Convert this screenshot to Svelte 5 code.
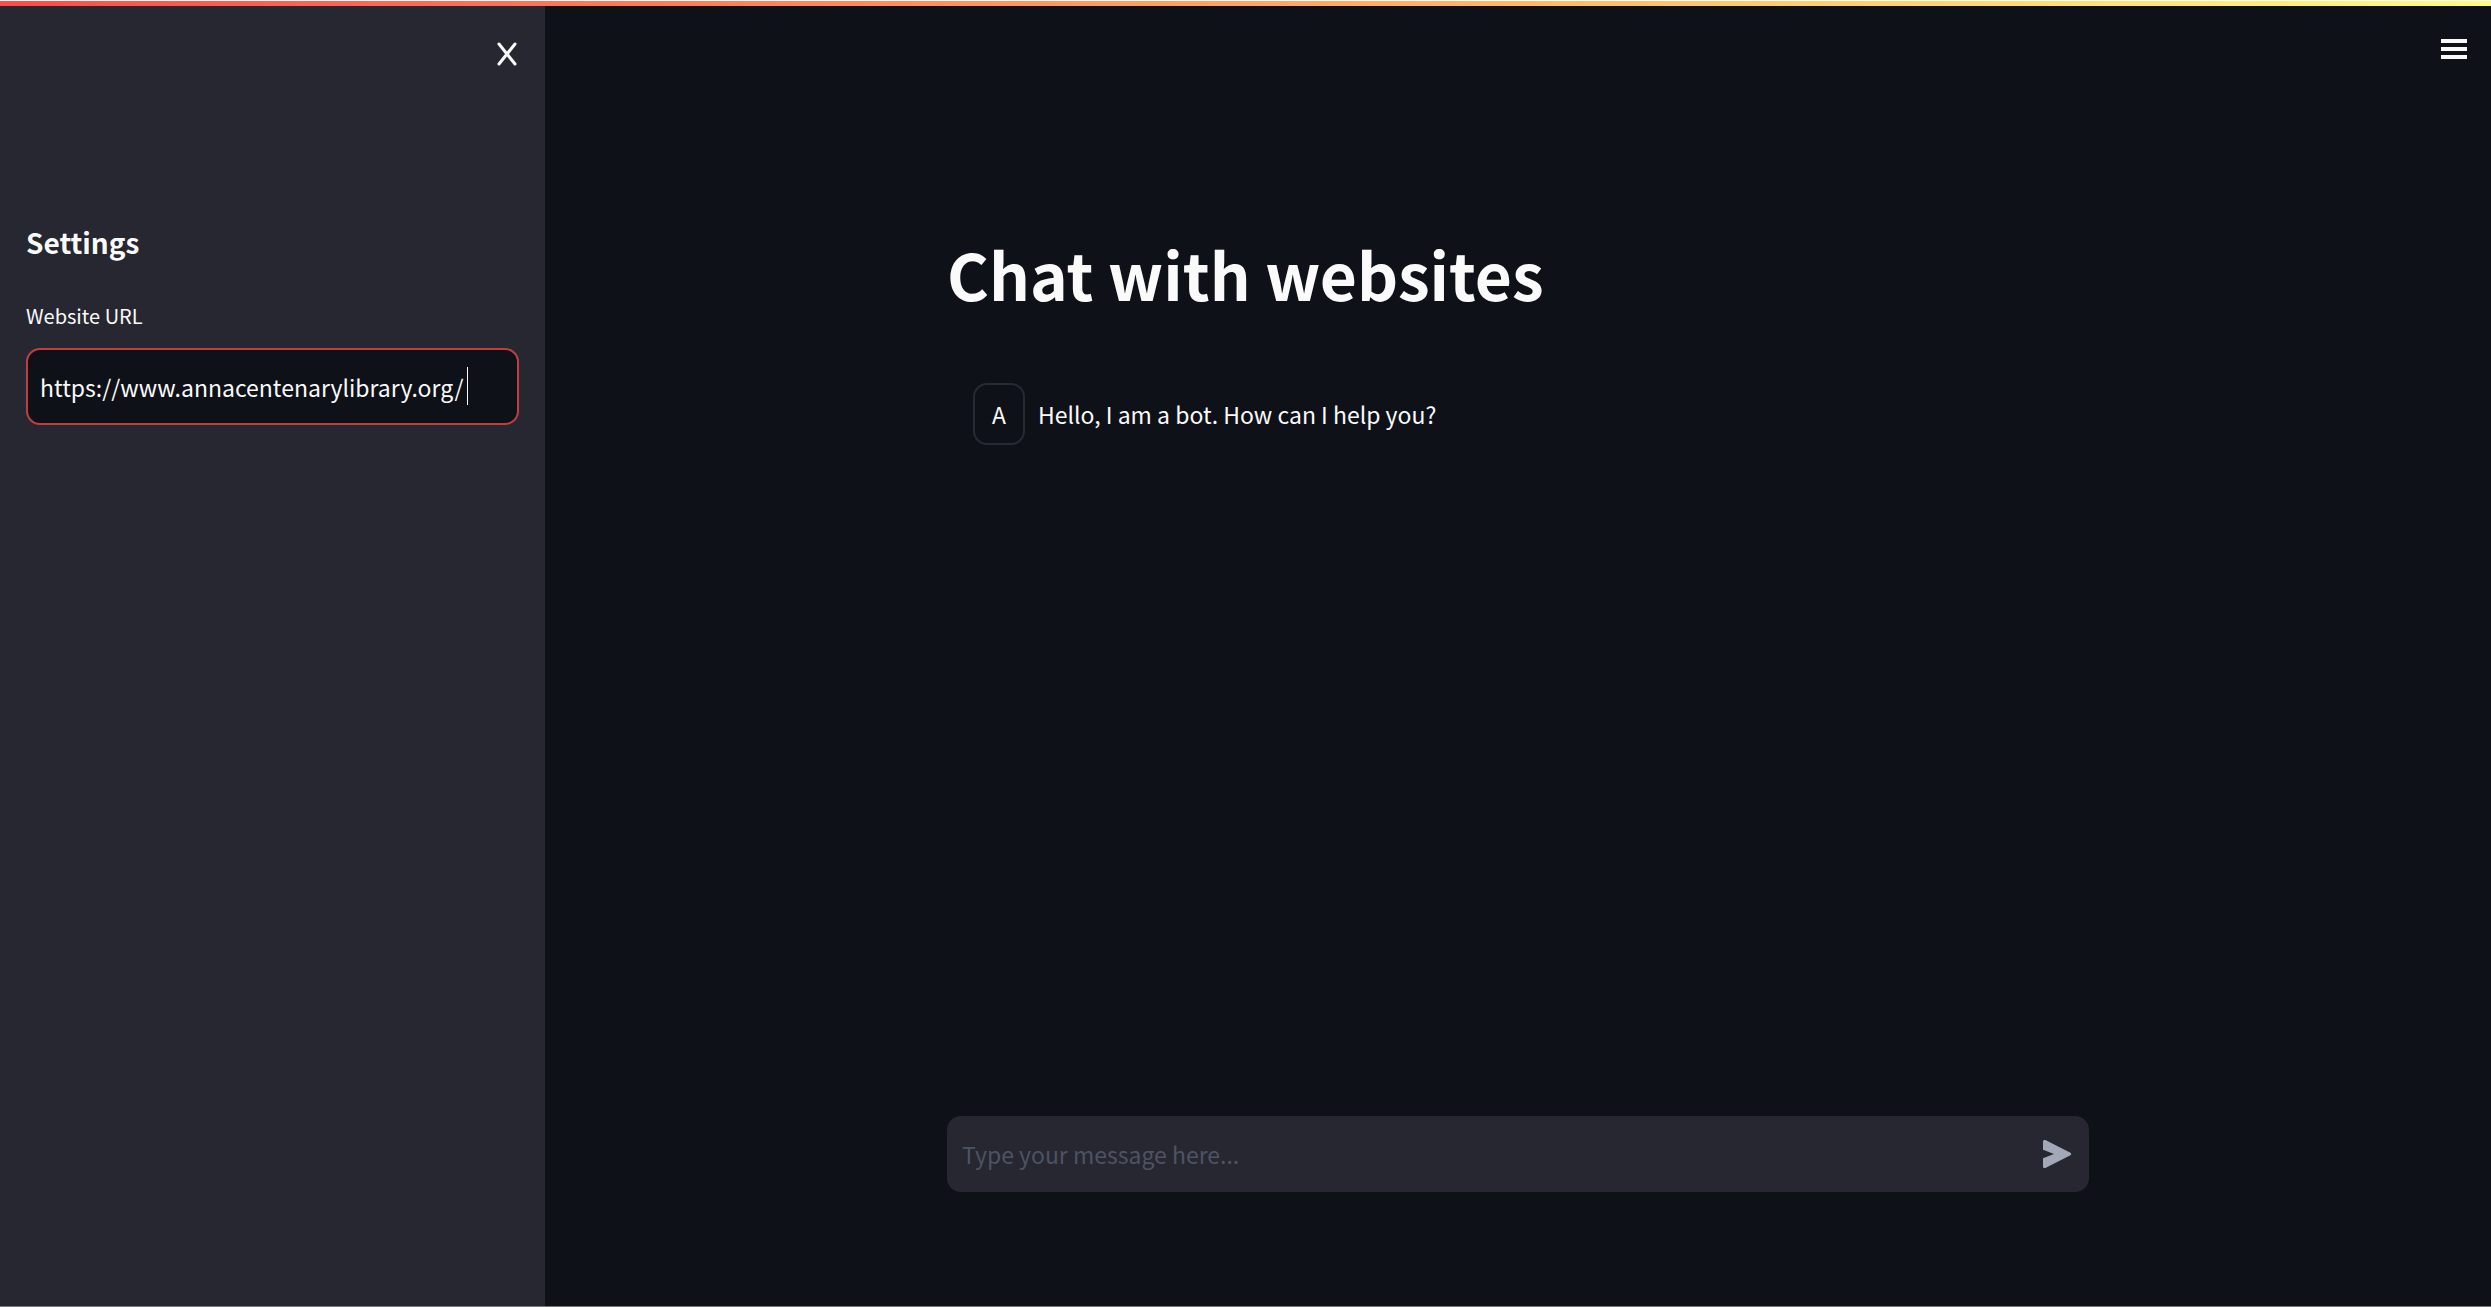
<script lang="ts">
  let url = $state('https://www.annacentenarylibrary.org/');
  let draft = $state('');
  const messages = [{ avatar: 'A', text: 'Hello, I am a bot. How can I help you?' }];
</script>

<div class="app">
  <div class="decoration"></div>
  <div class="columns">
    <aside class="sidebar">
      <div class="sidebar-top">
        <button class="icon-button" type="button" aria-label="Close sidebar">
          <svg class="close-icon" viewBox="0 0 20 24" aria-hidden="true">
            <path d="M2 2 L18 22 M18 2 L2 22" />
          </svg>
        </button>
      </div>
      <h2>Settings</h2>
      <label for="website-url">Website URL</label>
      <div class="url-field">
        <input id="website-url" type="text" bind:value={url} />
        <span class="caret"></span>
      </div>
    </aside>

    <main>
      <header>
        <button class="icon-button" type="button" aria-label="Main menu">
          <svg class="menu-icon" viewBox="0 0 26 22" aria-hidden="true">
            <path d="M0 1h26v4H0zM0 9h26v4H0zM0 17h26v4H0z" />
          </svg>
        </button>
      </header>
      <section class="content">
        <h1>Chat with websites</h1>
        {#each messages as message}
          <div class="message">
            <div class="avatar">{message.avatar}</div>
            <p>{message.text}</p>
          </div>
        {/each}
      </section>
      <form class="composer" onsubmit={(e) => e.preventDefault()}>
        <input type="text" aria-label="Message" placeholder="Type your message here..." bind:value={draft} />
        <button class="icon-button" type="submit" aria-label="Send message">
          <svg class="send-icon" viewBox="0 0 30 30" aria-hidden="true">
            <path d="M1 2.500v8.200L12 15 1 19.300v8.200c0 1.300 1.200 2 2.400 1.400l25-12.600c1-.6 1-2 0-2.600l-25-12.600C2.200.5 1 1.200 1 2.500z" />
          </svg>
        </button>
      </form>
    </main>
  </div>
</div>

<style>
  :global(body) {
    background: #0e1117;
  }

  .app {
    display: flex;
    flex-direction: column;
    box-sizing: border-box;
    min-height: 100vh;
    border-top: 1px solid #fff;
    border-bottom: 1px solid #77787c;
    color: #fafafa;
    font-family: "Noto Sans CJK SC", "Noto Sans", sans-serif;
    font-size: 23px;
    line-height: 36px;
  }

  .decoration {
    height: 5px;
    background: linear-gradient(90deg, #ff4b4b, #fffd80);
  }

  .columns {
    display: flex;
    flex: 1;
  }

  .sidebar {
    flex: none;
    box-sizing: border-box;
    width: 545px;
    padding: 24px 26px;
    background: #262730;
  }

  .sidebar-top {
    display: flex;
    justify-content: flex-end;
    height: 188px;
  }

  .icon-button {
    display: flex;
    align-items: center;
    justify-content: center;
    width: 48px;
    height: 48px;
    padding: 0;
    border: 0;
    background: none;
    cursor: pointer;
  }

  .sidebar-top .icon-button {
    width: 24px;
  }

  .close-icon {
    width: 20px;
    height: 24px;
    fill: none;
    stroke: #fafafa;
    stroke-width: 3;
    stroke-linecap: round;
  }

  h2 {
    margin: 0 0 32px;
    font-size: 28px;
    font-weight: 700;
    line-height: 48px;
  }

  label {
    display: block;
    margin-bottom: 14px;
    font-size: 20px;
  }

  input {
    box-sizing: border-box;
    width: 100%;
    min-width: 0;
    color: #fafafa;
    font: inherit;
    outline: none;
  }

  .url-field {
    position: relative;
  }

  .url-field input {
    display: block;
    height: 77px;
    padding: 0 12px;
    border: 2px solid #c03e41;
    border-radius: 14px;
    background: #0e1117;
  }

  .caret {
    position: absolute;
    top: 19px;
    left: 441px;
    width: 1px;
    height: 38px;
    background: #fafafa;
  }

  main {
    display: flex;
    flex: 1;
    flex-direction: column;
    align-items: center;
    min-width: 0;
    padding: 0 24px 114px;
    background: #0e1117;
  }

  header {
    display: flex;
    align-self: stretch;
    justify-content: flex-end;
    padding-top: 19px;
  }

  header .icon-button {
    width: 26px;
  }

  .menu-icon {
    width: 26px;
    height: 22px;
    fill: #fafafa;
  }

  .content {
    flex: 1;
    width: 100%;
    max-width: 1142px;
    padding-top: 152px;
  }

  h1 {
    margin: 0 0 62px;
    font-size: 64px;
    font-weight: 700;
    line-height: 96px;
  }

  .message {
    display: flex;
    align-items: center;
    gap: 13px;
    padding-left: 26px;
  }

  .message p {
    margin: 0;
  }

  .avatar {
    display: flex;
    align-items: center;
    justify-content: center;
    box-sizing: border-box;
    width: 52px;
    height: 62px;
    border: 2px solid #262a33;
    border-radius: 14px;
  }

  .composer {
    display: flex;
    align-items: center;
    box-sizing: border-box;
    width: 100%;
    max-width: 1142px;
    height: 76px;
    padding: 0 8px 0 15px;
    border-radius: 14px;
    background: #262730;
  }

  .composer input {
    flex: 1;
    padding: 0;
    border: 0;
    background: none;
  }

  .composer input::placeholder {
    color: #4d5364;
    opacity: 1;
  }

  .send-icon {
    width: 30px;
    height: 30px;
    fill: #a3a8b8;
  }
</style>
